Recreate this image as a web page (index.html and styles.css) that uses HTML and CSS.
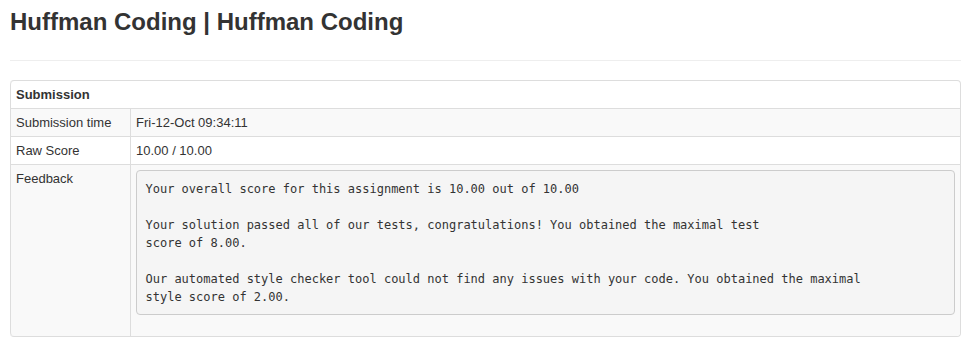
FILE: index.html
```html
<!DOCTYPE html>
<html lang="en">
<head>
  <meta charset="UTF-8" />
  <title>Huffman Coding | Huffman Coding</title>
  <link rel="stylesheet" href="styles.css">
</head>
<body>

  <div class="page">
    <h1>Huffman Coding | Huffman Coding</h1>
    <hr>

    <table class="result-table">
      <tr>
        <th colspan="2">Submission</th>
      </tr>
      <tr class="striped">
        <td class="label">Submission time</td>
        <td>Fri-12-Oct 09:34:11</td>
      </tr>
      <tr>
        <td class="label">Raw Score</td>
        <td>10.00 / 10.00</td>
      </tr>
      <tr class="striped">
        <td class="label">Feedback</td>
        <td>
<pre>Your overall score for this assignment is 10.00 out of 10.00

Your solution passed all of our tests, congratulations! You obtained the maximal test
score of 8.00.

Our automated style checker tool could not find any issues with your code. You obtained the maximal
style score of 2.00.</pre>
        </td>
      </tr>
    </table>
  </div>

</body>
</html>
```

FILE: styles.css
```css
body {
  margin: 0;
  font-family: "Liberation Sans", Arial, sans-serif;
  font-size: 13px;
  line-height: 18px;
  color: #333;
  background: #fff;
}
.page {
  padding: 0 7px 0 10px;
}
h1 {
  margin: 0;
  padding-top: 2px;
  font-size: 24px;
  line-height: 40px;
  font-weight: bold;
}
hr {
  margin: 18px 0;
  border: 0;
  border-top: 1px solid #eee;
  border-bottom: 1px solid #fff;
}
.result-table {
  width: 100%;
  border-collapse: separate;
  border-spacing: 0;
  border: 1px solid #ddd;
  border-left: 0;
  border-radius: 4px;
}
.result-table th,
.result-table td {
  padding: 5px 5px 4px;
  text-align: left;
  vertical-align: top;
  border-left: 1px solid #ddd;
  border-top: 1px solid #ddd;
}
.result-table tr:first-child th {
  border-top: 0;
  border-top-left-radius: 4px;
}
.result-table tr:last-child td:first-child {
  border-bottom-left-radius: 4px;
}
.result-table tr:last-child td:last-child {
  border-bottom-right-radius: 4px;
}
.result-table .label {
  width: 109px;
}
.striped td {
  background: #f9f9f9;
}
pre {
  margin: 0 0 17px;
  padding: 8.5px;
  font-family: "DejaVu Sans Mono", Menlo, monospace;
  font-size: 12px;
  line-height: 18px;
  color: #333;
  background: #f5f5f5;
  border: 1px solid #ccc;
  border-radius: 4px;
  white-space: pre;
}
```
